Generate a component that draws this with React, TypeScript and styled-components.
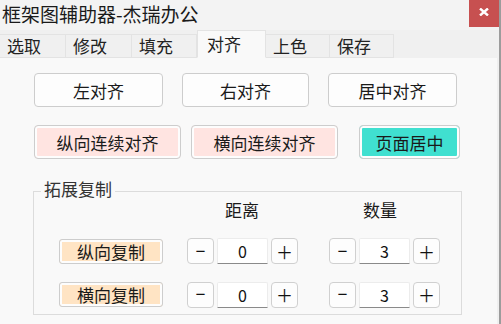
import styled, { createGlobalStyle } from "styled-components";

const cjk = `"Noto Sans CJK SC", "Noto Sans", sans-serif`;

const GlobalStyle = createGlobalStyle`
  html, body {
    margin: 0;
    padding: 0;
    background: #f0f0f0;
  }
  body {
    font-family: ${cjk};
    color: #1a1a1a;
  }
`;

const tabs = [
  { label: "选取", width: 66 },
  { label: "修改", width: 66 },
  { label: "填充", width: 65 },
  { label: "对齐", width: 69, active: true },
  { label: "上色", width: 64 },
  { label: "保存", width: 64 },
];

function Spinner({ value }: { value: number }) {
  return (
    <SpinBox>
      <SpinButton $kind="minus">−</SpinButton>
      <SpinEntry>{value}</SpinEntry>
      <SpinButton $kind="plus">＋</SpinButton>
    </SpinBox>
  );
}

function App() {
  return (
    <>
      <GlobalStyle />
      <Window>
        <TitleBar>
          <Title>框架图辅助器-杰瑞办公</Title>
          <CloseButton>
            <svg width="10" height="8" viewBox="0 0 10 8">
              <path
                d="M1 0.5 L9 7.5 M9 0.5 L1 7.5"
                stroke="#fff"
                strokeWidth="2.4"
                fill="none"
              />
            </svg>
          </CloseButton>
        </TitleBar>

        <TabStrip>
          {tabs.map((t) => (
            <Tab key={t.label} $width={t.width} $active={!!t.active}>
              {t.label}
            </Tab>
          ))}
        </TabStrip>

        <Panel>
          <ButtonRow $gap={19}>
            <PlainButton $width={129}>左对齐</PlainButton>
            <PlainButton $width={127}>右对齐</PlainButton>
            <PlainButton $width={129}>居中对齐</PlainButton>
          </ButtonRow>

          <ButtonRow $gap={10} $top={18}>
            <FillButton $width={147} $fill="#ffe4e1">
              纵向连续对齐
            </FillButton>
            <FillButton $width={147} $fill="#ffe4e1">
              横向连续对齐
            </FillButton>
            <FillButton $width={101} $fill="#40e0d0" $push={11}>
              页面居中
            </FillButton>
          </ButtonRow>

          <Group>
            <GroupLabel>拓展复制</GroupLabel>
            <GroupGrid>
              <span />
              <ColHead>距离</ColHead>
              <ColHead>数量</ColHead>

              <CopyButton>纵向复制</CopyButton>
              <Spinner value={0} />
              <Spinner value={3} />

              <CopyButton>横向复制</CopyButton>
              <Spinner value={0} />
              <Spinner value={3} />
            </GroupGrid>
          </Group>
        </Panel>
      </Window>
    </>
  );
}

export default App;

const Window = styled.div`
  width: 499px;
  height: 324px;
  display: flex;
  flex-direction: column;
  background: #f0f0f0;
  border-right: 2px solid #9c9c9c;
  overflow: hidden;
`;

const TitleBar = styled.div`
  height: 30px;
  flex: none;
  display: flex;
  justify-content: space-between;
  align-items: flex-start;
  background: #f3f3f3;
`;

const Title = styled.div`
  font-size: 19px;
  line-height: 28px;
  padding-left: 2px;
  color: #1a1a1a;
`;

const CloseButton = styled.div`
  width: 30px;
  height: 27px;
  background: #c75050;
  display: flex;
  align-items: center;
  justify-content: center;
  padding-bottom: 3px;
  box-sizing: border-box;
`;

const TabStrip = styled.div`
  height: 28px;
  flex: none;
  display: flex;
  align-items: flex-end;
  background: #f0f0f0;
  position: relative;
  z-index: 1;
  margin-bottom: -1px;
`;

const Tab = styled.div<{ $width: number; $active: boolean }>`
  width: ${(p) => p.$width}px;
  height: ${(p) => (p.$active ? 28 : 24)}px;
  box-sizing: border-box;
  padding-left: ${(p) => (p.$active ? 9 : 7)}px;
  font-size: 17px;
  line-height: ${(p) => (p.$active ? 25 : 22)}px;
  color: #222;
  background: ${(p) => (p.$active ? "#f9f9f9" : "#f0f0f0")};
  border: 1px solid #e3e3e3;
  border-left-width: ${(p) => (p.$active ? 1 : 0)}px;
  border-bottom-color: ${(p) => (p.$active ? "#f9f9f9" : "#e3e3e3")};
`;

const Panel = styled.div`
  flex: 1;
  background: #f9f9f9;
  border-top: 1px solid #e3e3e3;
  border-right: 2px solid #f0f0f0;
  padding: 15px 0 0 34px;
  display: flex;
  flex-direction: column;
  align-items: flex-start;
`;

const ButtonRow = styled.div<{ $gap: number; $top?: number }>`
  display: flex;
  gap: ${(p) => p.$gap}px;
  margin-top: ${(p) => p.$top ?? 0}px;
`;

const PlainButton = styled.div<{ $width: number }>`
  width: ${(p) => p.$width}px;
  height: 34px;
  box-sizing: border-box;
  border: 1px solid #cdcdcd;
  border-radius: 4px;
  background: #fdfdfd;
  font-size: 17px;
  display: flex;
  align-items: center;
  justify-content: center;
`;

const FillButton = styled(PlainButton)<{ $fill: string; $push?: number }>`
  background: ${(p) => p.$fill};
  box-shadow: inset 0 0 0 2px #fdfdfd;
  margin-left: ${(p) => p.$push ?? 0}px;
`;

const Group = styled.div`
  position: relative;
  margin: 32px 0 0 -1px;
  width: 429px;
  box-sizing: border-box;
  border: 1px solid #dcdcdc;
  padding: 8px 0 6px 25px;
`;

const GroupLabel = styled.div`
  position: absolute;
  top: -13px;
  left: 7px;
  padding: 0 3px;
  background: #f9f9f9;
  font-size: 17px;
  line-height: 20px;
  color: #333;
`;

const GroupGrid = styled.div`
  display: grid;
  grid-template-columns: 104px 110px 110px;
  grid-template-rows: 20px 26px 26px;
  column-gap: 24px;
  row-gap: 18px;
  align-items: center;

  & > :nth-child(3n) {
    margin-left: 8px;
  }
  & > :nth-child(n + 7) {
    margin-top: -1px;
  }
`;

const ColHead = styled.div`
  font-size: 17px;
  line-height: 20px;
  text-align: center;
`;

const CopyButton = styled.div`
  height: 25px;
  box-sizing: border-box;
  border: 1px solid #cdcdcd;
  border-radius: 3px;
  background: #ffe4c4;
  box-shadow: inset 0 0 0 2px #fdfdfd;
  font-size: 17px;
  display: flex;
  align-items: center;
  justify-content: center;
`;

const SpinBox = styled.div`
  display: flex;
  gap: 3px;
  height: 26px;
`;

const SpinButton = styled.div<{ $kind: "minus" | "plus" }>`
  width: 27px;
  flex: none;
  box-sizing: border-box;
  border: 1px solid #d0d0d0;
  border-radius: 4px;
  background: #fdfdfd;
  display: flex;
  align-items: center;
  justify-content: center;
  color: #111;
  font-family: ${(p) =>
    p.$kind === "minus" ? `"Liberation Sans", sans-serif` : cjk};
  font-size: 17px;
  line-height: 1;
`;

const SpinEntry = styled.div`
  width: 51px;
  flex: none;
  box-sizing: border-box;
  background: #ffffff;
  border: 1px solid #ececec;
  border-bottom: 1px solid #8a8a8a;
  border-radius: 2px 2px 0 0;
  display: flex;
  align-items: center;
  justify-content: center;
  font-size: 16px;
  color: #111;
`;
